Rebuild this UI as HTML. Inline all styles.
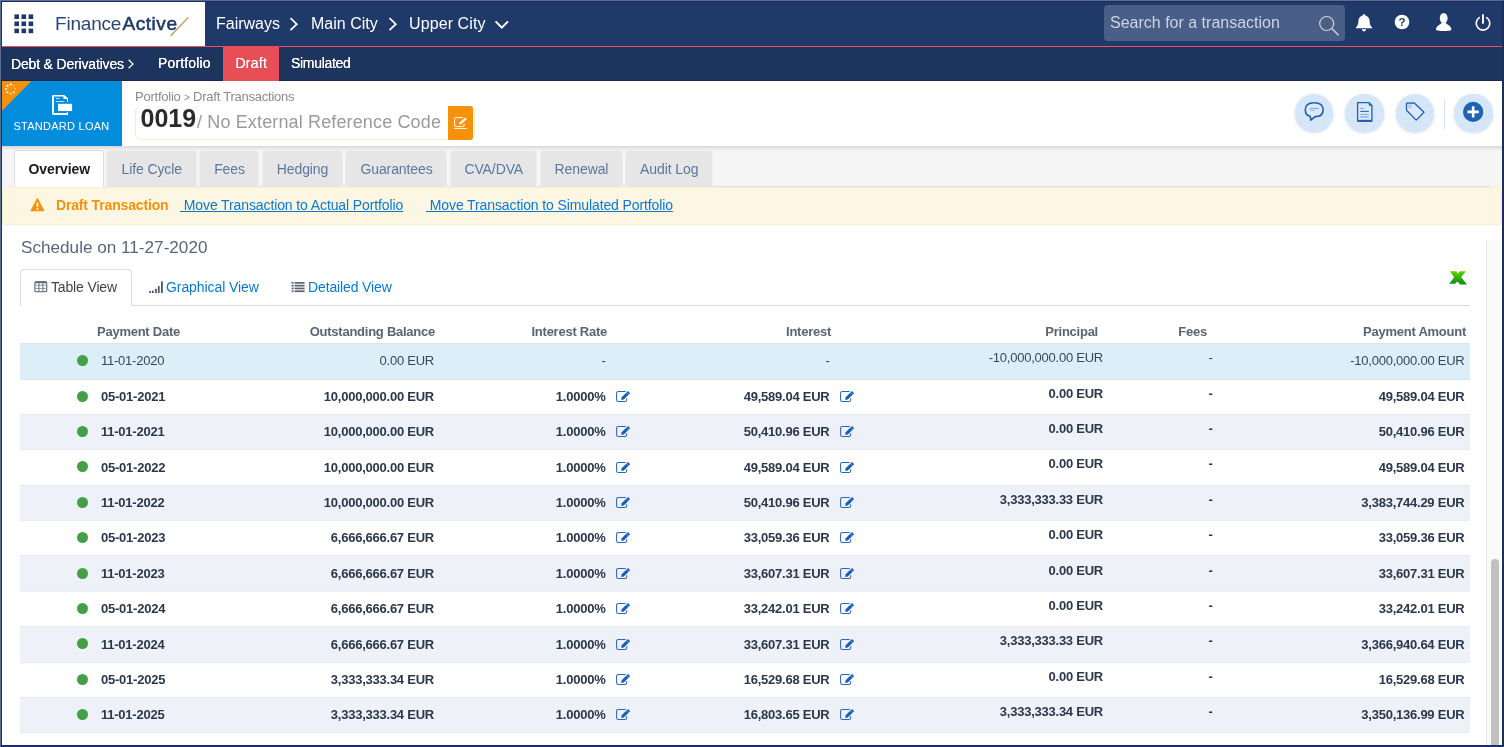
<!DOCTYPE html>
<html lang="en">
<head>
<meta charset="utf-8">
<title>Draft Transaction 0019</title>
<style>
*{box-sizing:border-box;margin:0;padding:0}
html,body{width:1504px;height:747px;overflow:hidden;background:#fff}
body{font-family:"Liberation Sans",sans-serif;font-size:13px;color:#2d3a4d;position:relative}
a{color:#0a78d1}
.abs{position:absolute}
#frame{position:absolute;left:0;top:0;width:1504px;height:747px;border:2px solid #1c2f5c;box-shadow:inset 0 0 0 0 #000;pointer-events:none;z-index:50}
#frame:before{content:"";position:absolute;left:-2px;top:-2px;right:-2px;bottom:-2px;border:1px solid #5f6f92;border-right-color:#1c2f5c;border-bottom-color:#1c2f5c}
/* top bar */
#topbar{position:absolute;left:0;top:0;width:1504px;height:46px;background:#1f3a68}
#logo{position:absolute;left:0;top:0;width:205px;height:46px;background:#fff}
#redline{position:absolute;left:0;top:46px;width:1504px;height:1px;background:#e8505b}
#subnav{position:absolute;left:0;top:47px;width:1504px;height:34px;background:#1d345e;border-bottom:1px solid #15284c}
.tb{position:absolute;color:#fff;font-size:16px;line-height:20px;white-space:nowrap}
.sn{position:absolute;color:#fff;font-size:14px;line-height:20px;top:54px;white-space:nowrap}
/* header */
#hdr{position:absolute;left:0;top:81px;width:1504px;height:65px;background:#fff}
#hshadow{position:absolute;left:0;top:146px;width:1504px;height:4px;background:linear-gradient(#d9d9d9,#f1f1f1)}
#loan{position:absolute;left:0;top:81px;width:122px;height:65px;background:#038bdc;overflow:hidden}
#tabsbg{position:absolute;left:0;top:150px;width:1504px;height:37px;background:#f5f5f5}
#tabline{position:absolute;left:14px;top:186px;width:1476px;height:1px;background:#dde1e6}
.tab{position:absolute;top:150px;height:37px;background:#e6e6e6;border:1px solid #efefef;border-bottom:0;border-radius:4px 4px 0 0;color:#5b77a0;font-size:14px;line-height:36px;text-align:center;white-space:nowrap;letter-spacing:-0.100px;padding-left:1px}
.tab.on{background:#fff;color:#1b1b1b;font-weight:bold;border-color:#ddd}
#alert{position:absolute;left:2px;top:187px;width:1499.500px;height:37.600px;background:#fdf6e2;border:1px solid #faedd2;border-radius:3px}
#sbtrack{position:absolute;left:1486px;top:240px;width:16px;height:507px;background:#fafafa;border-left:1px solid #e8e8e8}
#sbthumb{position:absolute;left:1491px;top:559px;width:7.700px;height:192px;background:#c1c1c1;border-radius:4px}
.circ{position:absolute;top:93.600px;width:38.500px;height:38.500px;border-radius:50%;background:#d6e6f9;box-shadow:0 1px 3px rgba(120,150,190,.35)}

#tbl{position:absolute;left:20px;top:343px;width:1450px}
.row{position:absolute;left:0;width:1450px;height:35.400px;font-weight:bold;color:#2b384b}
.row.alt:before,.row.first:before{content:"";box-sizing:border-box;position:absolute;left:0;top:0;width:1450px;height:36.700px;background:#eef1f7;border-top:1px solid #e6e9ee;border-bottom:1px solid #e9ecf1}
.row.last:before{height:36.200px}
.row.first{font-weight:normal;color:#38475a}
.row.first:before{background:#dceef8;border-top-color:#dfe3e6;border-bottom-color:#d9e4ea}
.row span{position:absolute;top:10.500px;line-height:16px;font-size:13px;white-space:nowrap;letter-spacing:-0.235px}
.row .dot{position:absolute;left:57.250px;top:12.300px;width:11px;height:11px;border-radius:50%;background:#43a047}
.row .c1{left:81px}
.row .c2{right:1036px}
.row .c3{right:864.500px}
.row .c4{right:640.500px}
.row .c5{right:367px;top:7.300px}
.row .c6{right:257.500px;top:7.300px}
.row .c7{right:5.500px}
.row svg{position:absolute;top:11.500px}
.th{position:absolute;top:324px;font-size:13px;line-height:16px;font-weight:bold;color:#5b6472;white-space:nowrap;letter-spacing:-0.250px}
#layer{position:absolute;left:0;top:0;width:1504px;height:747px;will-change:transform}
</style>
</head>
<body>
<div id="layer">
<div id="topbar"></div>
<div id="logo"></div>
<div id="redline"></div>
<div id="subnav"></div>
<div id="hdr"></div>
<div id="hshadow"></div>
<div id="loan"></div>
<div id="tabsbg"></div>
<div id="tabline"></div>
<div id="alert"></div>
<div id="sbtrack"></div>
<div id="sbthumb"></div>

<!-- grid icon -->
<svg class="abs" style="left:14px;top:14px" width="20" height="20" viewBox="0 0 20 20"><g fill="#1f3a68">
<rect x="0.4" y="0.4" width="4.6" height="4.6"/><rect x="7.5" y="0.4" width="4.6" height="4.6"/><rect x="14.6" y="0.4" width="4.6" height="4.6"/>
<rect x="0.4" y="7.5" width="4.6" height="4.6"/><rect x="7.5" y="7.5" width="4.6" height="4.6"/><rect x="14.6" y="7.5" width="4.6" height="4.6"/>
<rect x="0.4" y="14.6" width="4.6" height="4.6"/><rect x="7.5" y="14.6" width="4.6" height="4.6"/><rect x="14.6" y="14.6" width="4.6" height="4.6"/></g></svg>
<div id="brand" class="abs" style="left:55px;top:12px;font-size:19px;line-height:24px;color:#1f3a68;white-space:nowrap;letter-spacing:-0.2px"><span id="b1" style="color:#2b4675">Finance</span><span id="b2" style="-webkit-text-stroke:0.550px #1f3a68;letter-spacing:0.550px;margin-left:1.300px">Active</span></div>
<svg class="abs" style="left:168px;top:15px" width="24" height="24" viewBox="0 0 24 24"><path d="M2.6 20.8 L20.4 2.4" stroke="#b59a55" stroke-width="1.3" fill="none"/></svg>
<div class="tb" id="t1" style="top:14px;left:216px">Fairways</div>
<svg class="abs" style="left:288px;top:16px" width="12" height="16" viewBox="0 0 12 16"><path d="M2.5 2.2 L8.8 8.2 L2.5 14.2" stroke="#fff" stroke-width="1.7" fill="none"/></svg>
<div class="tb" id="t2" style="top:14px;left:311px">Main City</div>
<svg class="abs" style="left:387px;top:16px" width="12" height="16" viewBox="0 0 12 16"><path d="M2.5 2.2 L8.8 8.2 L2.5 14.2" stroke="#fff" stroke-width="1.7" fill="none"/></svg>
<div class="tb" id="t3" style="top:14px;left:409px;letter-spacing:0.100px">Upper City</div>
<svg class="abs" style="left:493px;top:18px" width="18" height="14" viewBox="0 0 18 14"><path d="M2.6 3.4 L8.8 9.6 L15 3.4" stroke="#fff" stroke-width="2" fill="none"/></svg>
<!-- search -->
<div class="abs" style="left:1104px;top:5px;width:241px;height:36px;background:#4a5f88;border-radius:4px"></div>
<div class="abs" id="srch" style="left:1110px;top:13px;font-size:16px;line-height:20px;color:#cdd3df;white-space:nowrap">Search for a transaction</div>
<svg class="abs" style="left:1316px;top:12.800px" width="26" height="26" viewBox="0 0 26 26"><circle cx="10.7" cy="10.5" r="7" stroke="#d3d4d8" stroke-width="1.2" fill="none"/><path d="M15.8 15.6 L22.6 22.2" stroke="#d3d4d8" stroke-width="1.4"/></svg>
<!-- bell -->
<svg class="abs" style="left:1354px;top:12.600px" width="20" height="20" viewBox="0 0 20 20"><path fill="#fff" d="M10 1.2c.8 0 1.3.5 1.3 1.200 2.700.600 4.300 2.700 4.300 5.500 0 3.400 1 5.200 2.600 6.500v.9H1.800v-.9c1.600-1.300 2.600-3.100 2.600-6.500 0-2.800 1.600-4.900 4.300-5.500 0-.7.500-1.200 1.300-1.200zM7.900 16.200h4.200c0 1.200-.9 2.100-2.100 2.100s-2.100-.9-2.100-2.100z"/></svg>
<!-- help -->
<svg class="abs" style="left:1393px;top:13.400px" width="18" height="18" viewBox="0 0 18 18"><circle cx="9" cy="9" r="7.3" fill="#fff"/><text x="9" y="13.200" text-anchor="middle" font-family="Liberation Sans, sans-serif" font-weight="bold" font-size="11.500" fill="#1f3a68">?</text></svg>
<!-- user -->
<svg class="abs" style="left:1434px;top:12px" width="20" height="20" viewBox="0 0 20 20"><ellipse cx="9.700" cy="6.300" rx="3.900" ry="5.200" fill="#fff"/><path fill="#fff" d="M2 17.500 C2 14,6 12.800,7.600 11 L11.800 11 C13.400 12.800,17.400 14,17.400 17.500 C17.400 18.500,14 19,9.700 19 C5.400 19,2 18.500,2 17.500Z"/></svg>
<!-- power -->
<svg class="abs" style="left:1473.400px;top:13px" width="20" height="20" viewBox="0 0 20 20"><path d="M6.300 4.600a6.800 6.800 0 1 0 7.400 0" stroke="#fff" stroke-width="1.700" fill="none" stroke-linecap="round"/><path d="M10 2v8" stroke="#fff" stroke-width="1.900" stroke-linecap="round"/></svg>
<!-- subnav -->
<div class="sn" id="s0" style="left:11px;top:54px;text-shadow:0 0 0.300px #fff;letter-spacing:-0.170px">Debt &amp; Derivatives</div>
<svg class="abs" style="left:127px;top:58px" width="8" height="12" viewBox="0 0 8 12"><path d="M1.600 1.800 L6 6 L1.600 10.200" stroke="#fff" stroke-width="1.200" fill="none"/></svg>
<div class="sn" id="s1" style="left:158px;top:53px;letter-spacing:0.150px;text-shadow:0 0 0.300px #fff">Portfolio</div>
<div class="abs" style="left:223px;top:46px;width:56px;height:35px;background:#e84e55"></div>
<div class="sn" id="s2" style="left:235.500px;top:53px;letter-spacing:0.250px;text-shadow:0 0 0.300px #fff">Draft</div>
<div class="sn" id="s3" style="left:291px;top:53px;letter-spacing:-0.300px;text-shadow:0 0 0.300px #fff">Simulated</div>


<!-- loan block -->
<svg class="abs" style="left:0;top:81px" width="32" height="33" viewBox="0 0 32 33"><path d="M0 0 H31.500 L0 31.800 Z" fill="#f6920a"/><g fill="#fff"><circle cx="10.70" cy="3.40" r="1.15" opacity="1"/><circle cx="7.45" cy="4.75" r="1.05" opacity="1"/><circle cx="6.10" cy="8.00" r="1.00" opacity="1"/><circle cx="7.45" cy="11.25" r="0.95" opacity="1"/><circle cx="10.70" cy="12.60" r="0.92" opacity="1"/><circle cx="13.95" cy="11.25" r="0.88" opacity="0.95"/><circle cx="15.30" cy="8.00" r="0.75" opacity="0.85"/><circle cx="13.95" cy="4.75" r="0.70" opacity="0.5"/></g></svg>
<svg class="abs" style="left:50px;top:93px" width="24" height="24" viewBox="0 0 24 24"><g fill="#fff"><path d="M3.200 2.060 H14.300 L17.950 5.300 V9.100 H17 V6 H13.400 V3.400 H3.950 V20 H17 V19 H17.950 V21.900 H3.200 A1.150 1.150 0 0 1 2.050 20.750 V3.200 A1.150 1.150 0 0 1 3.200 2.060 Z"/><rect x="8.070" y="10.800" width="14" height="7.260"/><rect x="5.900" y="5.050" width="3.600" height="0.900" opacity="0.850"/><rect x="5.900" y="8.050" width="8.400" height="0.900" opacity="0.800"/></g></svg>
<div class="abs" id="loantx" style="left:0;top:119px;width:122px;text-align:center;color:#fff;font-size:11px;line-height:14px;white-space:nowrap;padding-left:1px;letter-spacing:0.250px"><span id="lt">STANDARD LOAN</span></div>
<div class="abs" id="bc" style="left:135px;top:89px;font-size:13px;line-height:16px;color:#8a8a8a;white-space:nowrap;letter-spacing:-0.230px"><span id="bcs">Portfolio <span style="font-size:10px;position:relative;top:-0.500px">&gt;</span> Draft Transactions</span></div>
<div class="abs" style="left:135px;top:106px;width:340px;height:33.500px;border:1px solid #fdebd0;border-top-color:#fffdfa;border-radius:6px;background:#fff"></div>
<div class="abs" style="left:140.500px;top:103px;white-space:nowrap;line-height:30px;font-size:25px;color:#2b2b2b;font-weight:bold"><span id="num">0019</span></div>
<div class="abs" style="left:197px;top:107px;white-space:nowrap;line-height:30px;font-size:18px;color:#9a9a9a;letter-spacing:0.140px"><span id="ref">/ No External Reference Code</span></div>
<div class="abs" style="left:448px;top:106px;width:25px;height:34px;background:#f6920a;border-radius:0 3px 3px 0"></div>
<svg class="abs" style="left:453px;top:115px" width="16" height="16" viewBox="0 0 16 16"><path d="M10.100 2.600 H3.150 a1.600 1.600 0 0 0 -1.600 1.600 V10 a1.600 1.600 0 0 0 1.600 1.600 H9.550 a1.600 1.600 0 0 0 1.600 -1.600 V8.700" stroke="#fff" stroke-width="1" fill="none"/><path d="M6.200 9.500 L6.690 7.450 L12.240 2.600 L13.800 4.160 L8.250 9 Z" fill="#fff"/><path d="M1 13.500 H14" stroke="#fff" stroke-width="0.900"/></svg>
<!-- header action circles -->
<div class="circ" style="left:1294.700px"></div><div class="circ" style="left:1345.200px"></div><div class="circ" style="left:1395.800px"></div><div class="circ" style="left:1454.200px"></div>
<div class="abs" style="left:1444px;top:98px;width:1px;height:32px;background:#dfe5ee"></div>
<svg class="abs" style="left:1303px;top:101px" width="22" height="22" viewBox="0 0 22 22"><path d="M11.200 1.800 C17.500 1.800 20.100 4.500 20.100 8.700 C20.100 12.900 17.500 15.600 12.500 15.600 L12 15.600 L7.800 19.100 L7.200 15.300 C4 14.600 2.300 12.300 2.300 8.700 C2.300 4.500 5 1.800 11.200 1.800 Z" stroke="#1f5fae" stroke-width="1.600" fill="#dbe9fb" stroke-linejoin="round"/><path d="M6.900 7.400 H15.900" stroke="#6c9ad6" stroke-width="0.900"/><path d="M6.900 9.400 H11.900" stroke="#8fb2e2" stroke-width="0.900"/></svg>
<svg class="abs" style="left:1354px;top:100px" width="22" height="24" viewBox="0 0 22 24"><path d="M3.600 2.600 H15 L17.900 5.500 V21 H3.600 Z" stroke="#1f5fae" stroke-width="1.300" fill="#dbe9fb" stroke-linejoin="round"/><path d="M14.800 2.600 V5.700 H17.900 Z" fill="#1f5fae"/><path d="M6.300 8.450 H9.800" stroke="#6c9ad6" stroke-width="0.900"/><path d="M6.300 11.400 H14.800" stroke="#2a66b8" stroke-width="1.100"/><path d="M6.300 14.400 H14.800" stroke="#7ea6dc" stroke-width="1"/><path d="M6.300 16.900 H14.800" stroke="#8fb2e2" stroke-width="1.500"/><path d="M3.600 20.800 H17.900" stroke="#1f5fae" stroke-width="1.900"/></svg>
<svg class="abs" style="left:1403.300px;top:100px" width="24" height="24" viewBox="0 0 24 24"><path d="M3.500 3.100 L11 2.800 L21 12.200 L13.200 20.100 L3.500 10.300 Z" stroke="#1f5fae" stroke-width="1.300" fill="#dbe9fb" stroke-linejoin="round"/><circle cx="7" cy="6.200" r="1.400" stroke="#6c9ad6" stroke-width="0.700" fill="#eef4fd"/></svg>
<svg class="abs" style="left:1462px;top:101px" width="22" height="22" viewBox="0 0 22 22"><circle cx="11.150" cy="10.900" r="10.150" fill="#2062b2"/><path d="M11.150 5.200 V16.600 M5.450 10.900 H16.850" stroke="#fff" stroke-width="2.600"/></svg>


<!-- tabs -->
<div class="tab on" style="left:14px;width:89.5px">Overview</div>
<div class="tab" style="left:106px;width:90.5px">Life Cycle</div>
<div class="tab" style="left:199px;width:60px">Fees</div>
<div class="tab" style="left:261.5px;width:81px">Hedging</div>
<div class="tab" style="left:345px;width:102px">Guarantees</div>
<div class="tab" style="left:449.5px;width:87.5px">CVA/DVA</div>
<div class="tab" style="left:539.5px;width:83px">Renewal</div>
<div class="tab" style="left:625px;width:87.500px">Audit Log</div>
<!-- alert -->
<svg class="abs" style="left:29px;top:197px" width="16" height="16" viewBox="0 0 16 16"><path d="M8.400 1.800 L14.600 13.600 H2.200 Z" fill="#f6920a" stroke="#f6920a" stroke-width="1.200" stroke-linejoin="round"/><path d="M8.400 5.600 V9.800" stroke="#fff" stroke-width="1.700"/><circle cx="8.400" cy="11.800" r="0.950" fill="#fff"/></svg>
<div class="abs" id="al0" style="left:56px;top:197px;font-size:14px;line-height:16px;font-weight:bold;color:#f6920a;white-space:nowrap;letter-spacing:-0.160px">Draft Transaction</div>
<a class="abs" id="al1" style="left:180px;top:197px;font-size:14px;line-height:16px;white-space:nowrap;text-decoration:underline;letter-spacing:-0.110px">&nbsp;Move Transaction to Actual Portfolio</a>
<a class="abs" id="al2" style="left:426px;top:197px;font-size:14px;line-height:16px;white-space:nowrap;text-decoration:underline;letter-spacing:-0.110px">&nbsp;Move Transaction to Simulated Portfolio</a>
<!-- schedule -->
<div class="abs" id="sch" style="left:21px;top:236px;font-size:17.150px;line-height:22px;color:#5a6577;white-space:nowrap">Schedule on 11-27-2020</div>
<div class="abs" style="left:20px;top:305px;width:1450px;height:1px;background:#ddd"></div>
<div class="abs" style="left:20px;top:269px;width:112px;height:37px;background:#fff;border:1px solid #ddd;border-bottom:0;border-radius:4px 4px 0 0"></div>
<svg class="abs" style="left:34px;top:281px" width="14" height="12" viewBox="0 0 14 12"><rect x="0.900" y="0.900" width="11.800" height="9.800" rx="1" fill="none" stroke="#566074" stroke-width="1.100"/><path d="M1 1.400 H12.600" stroke="#566074" stroke-width="1.400"/><path d="M1 4.200 H13 M1 7.400 H13" stroke="#8a92a0" stroke-width="0.900"/><path d="M4.900 1 V10.600 M8.900 1 V10.600" stroke="#566074" stroke-width="0.900"/></svg>
<div class="abs" id="v1" style="left:51px;top:279px;font-size:14px;line-height:16px;color:#444;white-space:nowrap;letter-spacing:-0.150px">Table View</div>
<svg class="abs" style="left:148px;top:280px" width="16" height="14" viewBox="0 0 16 14"><g fill="#4a5365"><rect x="1.250" y="11.100" width="1.700" height="2"/><rect x="3.950" y="10.600" width="1.700" height="2.500"/><rect x="7.100" y="8.800" width="1.700" height="4.300"/><rect x="9.900" y="6.100" width="1.700" height="7"/><rect x="13" y="1.400" width="1.800" height="11.700"/></g></svg>
<a class="abs" id="v2" style="left:166px;top:279px;font-size:14px;line-height:16px;white-space:nowrap;text-decoration:none;letter-spacing:-0.080px">Graphical View</a>
<svg class="abs" style="left:290.800px;top:281px" width="14" height="12" viewBox="0 0 14 12"><g fill="#5a6272"><rect x="0.600" y="1" width="2" height="1.700"/><rect x="3.600" y="1" width="10" height="1.700"/><rect x="0.600" y="3.800" width="2" height="1.700"/><rect x="3.600" y="3.800" width="10" height="1.700"/><rect x="0.600" y="6.600" width="2" height="1.700"/><rect x="3.600" y="6.600" width="10" height="1.700"/><rect x="0.600" y="9.400" width="2" height="1.700"/><rect x="3.600" y="9.400" width="10" height="1.700"/></g></svg>
<a class="abs" id="v3" style="left:308px;top:279px;font-size:14px;line-height:16px;white-space:nowrap;text-decoration:none;letter-spacing:-0.130px">Detailed View</a>
<!-- excel -->
<svg class="abs" style="left:1448px;top:270px" width="20" height="16" viewBox="0 0 20 16"><defs><linearGradient id="xg" x1="0" y1="0" x2="0" y2="1"><stop offset="0" stop-color="#62d400"/><stop offset="1" stop-color="#07891c"/></linearGradient></defs><path d="M1.900 1.300 H8.500 L9.600 3.400 L11.900 1.300 H17.900 L13.200 7.300 L19 14.600 H12.200 L9.400 11.600 L7 13.700 H1.200 L6.100 7.300 Z" fill="url(#xg)"/></svg>


<div class="th" id="h1" style="left:97px">Payment Date</div>
<div class="th" id="h2" style="right:1069px">Outstanding Balance</div>
<div class="th" id="h3" style="right:897px">Interest Rate</div>
<div class="th" id="h4" style="right:673px">Interest</div>
<div class="th" id="h5" style="right:406px">Principal</div>
<div class="th" id="h6" style="right:297px">Fees</div>
<div class="th" id="h7" style="right:38px">Payment Amount</div>
<div id="tbl">
<div class="row first" style="top:-0.10px"><i class="dot"></i><span class="c1">11-01-2020</span><span class="c2">0.00 EUR</span><span class="c3">-</span><span class="c4">-</span><span class="c5">-10,000,000.00 EUR</span><span class="c6">-</span><span class="c7">-10,000,000.00 EUR</span></div>
<div class="row" style="top:35.30px"><i class="dot"></i><span class="c1">05-01-2021</span><span class="c2">10,000,000.00 EUR</span><span class="c3">1.0000%</span><svg style="left:595px" width="17" height="14" viewBox="0 0 17 14"><path d="M10.700 1.450 H3.400 a1.800 1.800 0 0 0 -1.800 1.800 V9.750 a1.800 1.800 0 0 0 1.800 1.800 H9.900 a1.800 1.800 0 0 0 1.800 -1.800 V8.200" stroke="#2a66b8" stroke-width="1.050" fill="none"/><path d="M6.200 9.900 L6.700 7.280 L12.980 1.100 L15.100 3.220 L8.820 9.400 Z" fill="#1b5fb5"/><path d="M11.440 2.640 L13.560 4.760" stroke="#fff" stroke-width="0.500" opacity="0.750"/></svg><span class="c4">49,589.04 EUR</span><svg style="left:819px" width="17" height="14" viewBox="0 0 17 14"><path d="M10.700 1.450 H3.400 a1.800 1.800 0 0 0 -1.800 1.800 V9.750 a1.800 1.800 0 0 0 1.800 1.800 H9.900 a1.800 1.800 0 0 0 1.800 -1.800 V8.200" stroke="#2a66b8" stroke-width="1.050" fill="none"/><path d="M6.200 9.900 L6.700 7.280 L12.980 1.100 L15.100 3.220 L8.820 9.400 Z" fill="#1b5fb5"/><path d="M11.440 2.640 L13.560 4.760" stroke="#fff" stroke-width="0.500" opacity="0.750"/></svg><span class="c5">0.00 EUR</span><span class="c6">-</span><span class="c7">49,589.04 EUR</span></div>
<div class="row alt" style="top:70.70px"><i class="dot"></i><span class="c1">11-01-2021</span><span class="c2">10,000,000.00 EUR</span><span class="c3">1.0000%</span><svg style="left:595px" width="17" height="14" viewBox="0 0 17 14"><path d="M10.700 1.450 H3.400 a1.800 1.800 0 0 0 -1.800 1.800 V9.750 a1.800 1.800 0 0 0 1.800 1.800 H9.900 a1.800 1.800 0 0 0 1.800 -1.800 V8.200" stroke="#2a66b8" stroke-width="1.050" fill="none"/><path d="M6.200 9.900 L6.700 7.280 L12.980 1.100 L15.100 3.220 L8.820 9.400 Z" fill="#1b5fb5"/><path d="M11.440 2.640 L13.560 4.760" stroke="#fff" stroke-width="0.500" opacity="0.750"/></svg><span class="c4">50,410.96 EUR</span><svg style="left:819px" width="17" height="14" viewBox="0 0 17 14"><path d="M10.700 1.450 H3.400 a1.800 1.800 0 0 0 -1.800 1.800 V9.750 a1.800 1.800 0 0 0 1.800 1.800 H9.900 a1.800 1.800 0 0 0 1.800 -1.800 V8.200" stroke="#2a66b8" stroke-width="1.050" fill="none"/><path d="M6.200 9.900 L6.700 7.280 L12.980 1.100 L15.100 3.220 L8.820 9.400 Z" fill="#1b5fb5"/><path d="M11.440 2.640 L13.560 4.760" stroke="#fff" stroke-width="0.500" opacity="0.750"/></svg><span class="c5">0.00 EUR</span><span class="c6">-</span><span class="c7">50,410.96 EUR</span></div>
<div class="row" style="top:106.10px"><i class="dot"></i><span class="c1">05-01-2022</span><span class="c2">10,000,000.00 EUR</span><span class="c3">1.0000%</span><svg style="left:595px" width="17" height="14" viewBox="0 0 17 14"><path d="M10.700 1.450 H3.400 a1.800 1.800 0 0 0 -1.800 1.800 V9.750 a1.800 1.800 0 0 0 1.800 1.800 H9.900 a1.800 1.800 0 0 0 1.800 -1.800 V8.200" stroke="#2a66b8" stroke-width="1.050" fill="none"/><path d="M6.200 9.900 L6.700 7.280 L12.980 1.100 L15.100 3.220 L8.820 9.400 Z" fill="#1b5fb5"/><path d="M11.440 2.640 L13.560 4.760" stroke="#fff" stroke-width="0.500" opacity="0.750"/></svg><span class="c4">49,589.04 EUR</span><svg style="left:819px" width="17" height="14" viewBox="0 0 17 14"><path d="M10.700 1.450 H3.400 a1.800 1.800 0 0 0 -1.800 1.800 V9.750 a1.800 1.800 0 0 0 1.800 1.800 H9.900 a1.800 1.800 0 0 0 1.800 -1.800 V8.200" stroke="#2a66b8" stroke-width="1.050" fill="none"/><path d="M6.200 9.900 L6.700 7.280 L12.980 1.100 L15.100 3.220 L8.820 9.400 Z" fill="#1b5fb5"/><path d="M11.440 2.640 L13.560 4.760" stroke="#fff" stroke-width="0.500" opacity="0.750"/></svg><span class="c5">0.00 EUR</span><span class="c6">-</span><span class="c7">49,589.04 EUR</span></div>
<div class="row alt" style="top:141.50px"><i class="dot"></i><span class="c1">11-01-2022</span><span class="c2">10,000,000.00 EUR</span><span class="c3">1.0000%</span><svg style="left:595px" width="17" height="14" viewBox="0 0 17 14"><path d="M10.700 1.450 H3.400 a1.800 1.800 0 0 0 -1.800 1.800 V9.750 a1.800 1.800 0 0 0 1.800 1.800 H9.900 a1.800 1.800 0 0 0 1.800 -1.800 V8.200" stroke="#2a66b8" stroke-width="1.050" fill="none"/><path d="M6.200 9.900 L6.700 7.280 L12.980 1.100 L15.100 3.220 L8.820 9.400 Z" fill="#1b5fb5"/><path d="M11.440 2.640 L13.560 4.760" stroke="#fff" stroke-width="0.500" opacity="0.750"/></svg><span class="c4">50,410.96 EUR</span><svg style="left:819px" width="17" height="14" viewBox="0 0 17 14"><path d="M10.700 1.450 H3.400 a1.800 1.800 0 0 0 -1.800 1.800 V9.750 a1.800 1.800 0 0 0 1.800 1.800 H9.900 a1.800 1.800 0 0 0 1.800 -1.800 V8.200" stroke="#2a66b8" stroke-width="1.050" fill="none"/><path d="M6.200 9.900 L6.700 7.280 L12.980 1.100 L15.100 3.220 L8.820 9.400 Z" fill="#1b5fb5"/><path d="M11.440 2.640 L13.560 4.760" stroke="#fff" stroke-width="0.500" opacity="0.750"/></svg><span class="c5">3,333,333.33 EUR</span><span class="c6">-</span><span class="c7">3,383,744.29 EUR</span></div>
<div class="row" style="top:176.90px"><i class="dot"></i><span class="c1">05-01-2023</span><span class="c2">6,666,666.67 EUR</span><span class="c3">1.0000%</span><svg style="left:595px" width="17" height="14" viewBox="0 0 17 14"><path d="M10.700 1.450 H3.400 a1.800 1.800 0 0 0 -1.800 1.800 V9.750 a1.800 1.800 0 0 0 1.800 1.800 H9.900 a1.800 1.800 0 0 0 1.800 -1.800 V8.200" stroke="#2a66b8" stroke-width="1.050" fill="none"/><path d="M6.200 9.900 L6.700 7.280 L12.980 1.100 L15.100 3.220 L8.820 9.400 Z" fill="#1b5fb5"/><path d="M11.440 2.640 L13.560 4.760" stroke="#fff" stroke-width="0.500" opacity="0.750"/></svg><span class="c4">33,059.36 EUR</span><svg style="left:819px" width="17" height="14" viewBox="0 0 17 14"><path d="M10.700 1.450 H3.400 a1.800 1.800 0 0 0 -1.800 1.800 V9.750 a1.800 1.800 0 0 0 1.800 1.800 H9.900 a1.800 1.800 0 0 0 1.800 -1.800 V8.200" stroke="#2a66b8" stroke-width="1.050" fill="none"/><path d="M6.200 9.900 L6.700 7.280 L12.980 1.100 L15.100 3.220 L8.820 9.400 Z" fill="#1b5fb5"/><path d="M11.440 2.640 L13.560 4.760" stroke="#fff" stroke-width="0.500" opacity="0.750"/></svg><span class="c5">0.00 EUR</span><span class="c6">-</span><span class="c7">33,059.36 EUR</span></div>
<div class="row alt" style="top:212.30px"><i class="dot"></i><span class="c1">11-01-2023</span><span class="c2">6,666,666.67 EUR</span><span class="c3">1.0000%</span><svg style="left:595px" width="17" height="14" viewBox="0 0 17 14"><path d="M10.700 1.450 H3.400 a1.800 1.800 0 0 0 -1.800 1.800 V9.750 a1.800 1.800 0 0 0 1.800 1.800 H9.900 a1.800 1.800 0 0 0 1.800 -1.800 V8.200" stroke="#2a66b8" stroke-width="1.050" fill="none"/><path d="M6.200 9.900 L6.700 7.280 L12.980 1.100 L15.100 3.220 L8.820 9.400 Z" fill="#1b5fb5"/><path d="M11.440 2.640 L13.560 4.760" stroke="#fff" stroke-width="0.500" opacity="0.750"/></svg><span class="c4">33,607.31 EUR</span><svg style="left:819px" width="17" height="14" viewBox="0 0 17 14"><path d="M10.700 1.450 H3.400 a1.800 1.800 0 0 0 -1.800 1.800 V9.750 a1.800 1.800 0 0 0 1.800 1.800 H9.900 a1.800 1.800 0 0 0 1.800 -1.800 V8.200" stroke="#2a66b8" stroke-width="1.050" fill="none"/><path d="M6.200 9.900 L6.700 7.280 L12.980 1.100 L15.100 3.220 L8.820 9.400 Z" fill="#1b5fb5"/><path d="M11.440 2.640 L13.560 4.760" stroke="#fff" stroke-width="0.500" opacity="0.750"/></svg><span class="c5">0.00 EUR</span><span class="c6">-</span><span class="c7">33,607.31 EUR</span></div>
<div class="row" style="top:247.70px"><i class="dot"></i><span class="c1">05-01-2024</span><span class="c2">6,666,666.67 EUR</span><span class="c3">1.0000%</span><svg style="left:595px" width="17" height="14" viewBox="0 0 17 14"><path d="M10.700 1.450 H3.400 a1.800 1.800 0 0 0 -1.800 1.800 V9.750 a1.800 1.800 0 0 0 1.800 1.800 H9.900 a1.800 1.800 0 0 0 1.800 -1.800 V8.200" stroke="#2a66b8" stroke-width="1.050" fill="none"/><path d="M6.200 9.900 L6.700 7.280 L12.980 1.100 L15.100 3.220 L8.820 9.400 Z" fill="#1b5fb5"/><path d="M11.440 2.640 L13.560 4.760" stroke="#fff" stroke-width="0.500" opacity="0.750"/></svg><span class="c4">33,242.01 EUR</span><svg style="left:819px" width="17" height="14" viewBox="0 0 17 14"><path d="M10.700 1.450 H3.400 a1.800 1.800 0 0 0 -1.800 1.800 V9.750 a1.800 1.800 0 0 0 1.800 1.800 H9.900 a1.800 1.800 0 0 0 1.800 -1.800 V8.200" stroke="#2a66b8" stroke-width="1.050" fill="none"/><path d="M6.200 9.900 L6.700 7.280 L12.980 1.100 L15.100 3.220 L8.820 9.400 Z" fill="#1b5fb5"/><path d="M11.440 2.640 L13.560 4.760" stroke="#fff" stroke-width="0.500" opacity="0.750"/></svg><span class="c5">0.00 EUR</span><span class="c6">-</span><span class="c7">33,242.01 EUR</span></div>
<div class="row alt" style="top:283.10px"><i class="dot"></i><span class="c1">11-01-2024</span><span class="c2">6,666,666.67 EUR</span><span class="c3">1.0000%</span><svg style="left:595px" width="17" height="14" viewBox="0 0 17 14"><path d="M10.700 1.450 H3.400 a1.800 1.800 0 0 0 -1.800 1.800 V9.750 a1.800 1.800 0 0 0 1.800 1.800 H9.900 a1.800 1.800 0 0 0 1.800 -1.800 V8.200" stroke="#2a66b8" stroke-width="1.050" fill="none"/><path d="M6.200 9.900 L6.700 7.280 L12.980 1.100 L15.100 3.220 L8.820 9.400 Z" fill="#1b5fb5"/><path d="M11.440 2.640 L13.560 4.760" stroke="#fff" stroke-width="0.500" opacity="0.750"/></svg><span class="c4">33,607.31 EUR</span><svg style="left:819px" width="17" height="14" viewBox="0 0 17 14"><path d="M10.700 1.450 H3.400 a1.800 1.800 0 0 0 -1.800 1.800 V9.750 a1.800 1.800 0 0 0 1.800 1.800 H9.900 a1.800 1.800 0 0 0 1.800 -1.800 V8.200" stroke="#2a66b8" stroke-width="1.050" fill="none"/><path d="M6.200 9.900 L6.700 7.280 L12.980 1.100 L15.100 3.220 L8.820 9.400 Z" fill="#1b5fb5"/><path d="M11.440 2.640 L13.560 4.760" stroke="#fff" stroke-width="0.500" opacity="0.750"/></svg><span class="c5">3,333,333.33 EUR</span><span class="c6">-</span><span class="c7">3,366,940.64 EUR</span></div>
<div class="row" style="top:318.50px"><i class="dot"></i><span class="c1">05-01-2025</span><span class="c2">3,333,333.34 EUR</span><span class="c3">1.0000%</span><svg style="left:595px" width="17" height="14" viewBox="0 0 17 14"><path d="M10.700 1.450 H3.400 a1.800 1.800 0 0 0 -1.800 1.800 V9.750 a1.800 1.800 0 0 0 1.800 1.800 H9.900 a1.800 1.800 0 0 0 1.800 -1.800 V8.200" stroke="#2a66b8" stroke-width="1.050" fill="none"/><path d="M6.200 9.900 L6.700 7.280 L12.980 1.100 L15.100 3.220 L8.820 9.400 Z" fill="#1b5fb5"/><path d="M11.440 2.640 L13.560 4.760" stroke="#fff" stroke-width="0.500" opacity="0.750"/></svg><span class="c4">16,529.68 EUR</span><svg style="left:819px" width="17" height="14" viewBox="0 0 17 14"><path d="M10.700 1.450 H3.400 a1.800 1.800 0 0 0 -1.800 1.800 V9.750 a1.800 1.800 0 0 0 1.800 1.800 H9.900 a1.800 1.800 0 0 0 1.800 -1.800 V8.200" stroke="#2a66b8" stroke-width="1.050" fill="none"/><path d="M6.200 9.900 L6.700 7.280 L12.980 1.100 L15.100 3.220 L8.820 9.400 Z" fill="#1b5fb5"/><path d="M11.440 2.640 L13.560 4.760" stroke="#fff" stroke-width="0.500" opacity="0.750"/></svg><span class="c5">0.00 EUR</span><span class="c6">-</span><span class="c7">16,529.68 EUR</span></div>
<div class="row alt last" style="top:353.90px"><i class="dot"></i><span class="c1">11-01-2025</span><span class="c2">3,333,333.34 EUR</span><span class="c3">1.0000%</span><svg style="left:595px" width="17" height="14" viewBox="0 0 17 14"><path d="M10.700 1.450 H3.400 a1.800 1.800 0 0 0 -1.800 1.800 V9.750 a1.800 1.800 0 0 0 1.800 1.800 H9.900 a1.800 1.800 0 0 0 1.800 -1.800 V8.200" stroke="#2a66b8" stroke-width="1.050" fill="none"/><path d="M6.200 9.900 L6.700 7.280 L12.980 1.100 L15.100 3.220 L8.820 9.400 Z" fill="#1b5fb5"/><path d="M11.440 2.640 L13.560 4.760" stroke="#fff" stroke-width="0.500" opacity="0.750"/></svg><span class="c4">16,803.65 EUR</span><svg style="left:819px" width="17" height="14" viewBox="0 0 17 14"><path d="M10.700 1.450 H3.400 a1.800 1.800 0 0 0 -1.800 1.800 V9.750 a1.800 1.800 0 0 0 1.800 1.800 H9.900 a1.800 1.800 0 0 0 1.800 -1.800 V8.200" stroke="#2a66b8" stroke-width="1.050" fill="none"/><path d="M6.200 9.900 L6.700 7.280 L12.980 1.100 L15.100 3.220 L8.820 9.400 Z" fill="#1b5fb5"/><path d="M11.440 2.640 L13.560 4.760" stroke="#fff" stroke-width="0.500" opacity="0.750"/></svg><span class="c5">3,333,333.34 EUR</span><span class="c6">-</span><span class="c7">3,350,136.99 EUR</span></div>
</div>

<!--CONTENT5-->
<div id="frame"></div>
</div>
</body>
</html>
